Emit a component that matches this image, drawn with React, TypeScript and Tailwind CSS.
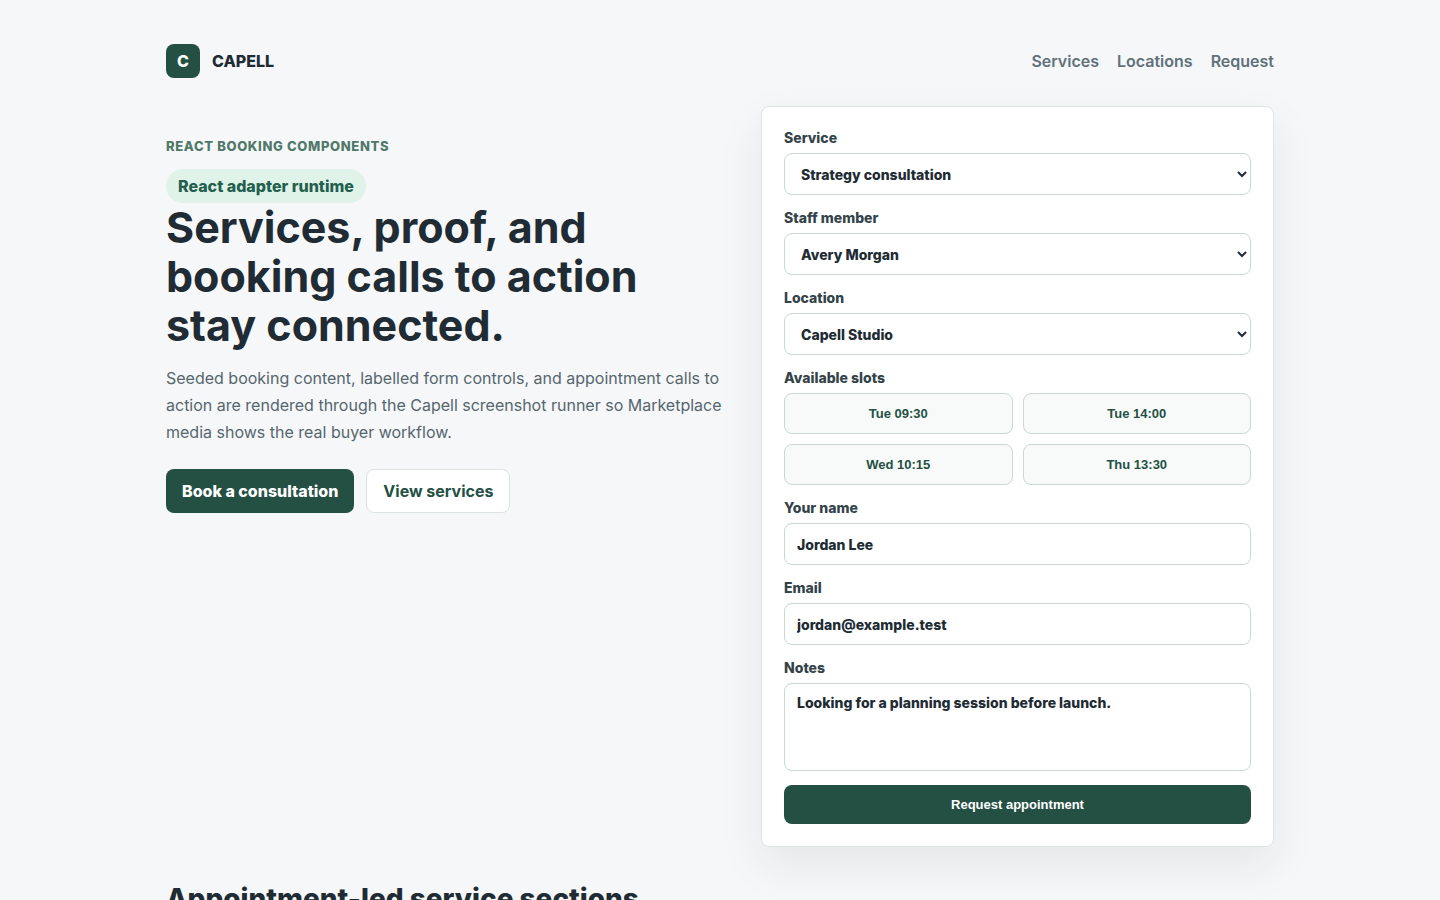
const navLinks = [
  { label: "Services", href: "#services" },
  { label: "Locations", href: "#locations" },
  { label: "Request", href: "#request" },
];

const selects = [
  {
    id: "service",
    label: "Service",
    options: ["Strategy consultation", "Follow-up session"],
  },
  { id: "staff", label: "Staff member", options: ["Avery Morgan"] },
  { id: "location", label: "Location", options: ["Capell Studio"] },
];

const slots = ["Tue 09:30", "Tue 14:00", "Wed 10:15", "Thu 13:30"];

const groupClass = "flex flex-col gap-[6px]";
const labelClass = "text-sm leading-[18px] font-extrabold text-[#34434a]";
const fieldClass =
  "w-full rounded-lg border border-[#c9d8d3] bg-white px-3 text-sm font-extrabold text-[#202b33]";

const Header = () => {
  return (
    <header className="flex items-center justify-between">
      <a
        href="#top"
        className="flex items-center gap-3 font-extrabold text-[#202b33]"
      >
        <span className="flex size-[34px] items-center justify-center rounded-lg bg-[#245044] text-white">
          C
        </span>
        CAPELL
      </a>
      <nav className="flex gap-[18px] font-semibold text-[#61717a]">
        {navLinks.map((link) => (
          <a key={link.label} href={link.href}>
            {link.label}
          </a>
        ))}
      </nav>
    </header>
  );
};

const Hero = () => {
  return (
    <section className="pt-7">
      <p className="text-[13px] leading-6 font-extrabold tracking-wider text-[#507868] uppercase">
        React booking components
      </p>
      <div className="pt-[11px]">
        <span className="inline-flex h-[34px] items-center rounded-full bg-[#dff3e9] px-3 font-extrabold text-[#245f4d]">
          React adapter runtime
        </span>
      </div>
      <h1 className="max-w-[560px] text-[43px] leading-[49px] font-bold text-[#202b33]">
        Services, proof, and booking calls to action stay connected.
      </h1>
      <p className="mt-[15px] text-base leading-[27px] text-[#56666e]">
        Seeded booking content, labelled form controls, and appointment calls to
        action are rendered through the Capell screenshot runner so Marketplace
        media shows the real buyer workflow.
      </p>
      <div className="mt-[23px] flex gap-3">
        <a
          href="#request"
          className="flex h-11 items-center rounded-lg bg-[#245044] px-4 font-extrabold text-white"
        >
          Book a consultation
        </a>
        <a
          href="#services"
          className="flex h-11 items-center rounded-lg border border-[#dbe4e1] bg-white px-4 font-bold text-[#245044]"
        >
          View services
        </a>
      </div>
    </section>
  );
};

const BookingForm = () => {
  return (
    <form
      id="request"
      onSubmit={(e) => e.preventDefault()}
      className="flex flex-col gap-[14px] rounded-lg border border-[#dde5e2] bg-white p-[22px] shadow-[0_18px_45px_rgba(32,36,36,0.08)]"
    >
      {selects.map((field) => (
        <div key={field.id} className={groupClass}>
          <label htmlFor={field.id} className={labelClass}>
            {field.label}
          </label>
          <select id={field.id} className={`${fieldClass} h-[42px]`}>
            {field.options.map((option) => (
              <option key={option}>{option}</option>
            ))}
          </select>
        </div>
      ))}
      <div role="group" aria-labelledby="slots-label" className={groupClass}>
        <span id="slots-label" className={labelClass}>
          Available slots
        </span>
        <div className="grid grid-cols-2 gap-[10px]">
          {slots.map((slot) => (
            <button
              key={slot}
              type="button"
              className="h-[41px] rounded-lg border border-[#c9d8d3] bg-[#f7faf9] font-['Liberation_Sans',sans-serif] text-[13px] font-bold text-[#245044]"
            >
              {slot}
            </button>
          ))}
        </div>
      </div>
      <div className={groupClass}>
        <label htmlFor="name" className={labelClass}>
          Your name
        </label>
        <input
          id="name"
          type="text"
          defaultValue="Jordan Lee"
          className={`${fieldClass} h-[42px]`}
        />
      </div>
      <div className={groupClass}>
        <label htmlFor="email" className={labelClass}>
          Email
        </label>
        <input
          id="email"
          type="email"
          defaultValue="jordan@example.test"
          className={`${fieldClass} h-[42px]`}
        />
      </div>
      <div className={groupClass}>
        <label htmlFor="notes" className={labelClass}>
          Notes
        </label>
        <textarea
          id="notes"
          defaultValue="Looking for a planning session before launch."
          className={`${fieldClass} h-[88px] resize-none py-[9px]`}
        />
      </div>
      <button
        type="submit"
        className="h-[39px] rounded-lg bg-[#245044] font-['Liberation_Sans',sans-serif] text-[13px] font-bold text-white"
      >
        Request appointment
      </button>
    </form>
  );
};

const App = () => {
  return (
    <div
      id="top"
      className="min-h-screen bg-[#f5f7f9] px-8 pt-11 font-['Inter',sans-serif]"
    >
      <div className="mx-auto max-w-[1108px]">
        <Header />
        <main className="pt-7">
          <div className="grid gap-9 lg:grid-cols-[1fr_513px]">
            <Hero />
            <BookingForm />
          </div>
          <section id="services" className="pt-8">
            <h2 className="text-[28px] leading-10 font-extrabold text-[#202b33]">
              Appointment-led service sections
            </h2>
          </section>
        </main>
      </div>
    </div>
  );
};

export default App;
